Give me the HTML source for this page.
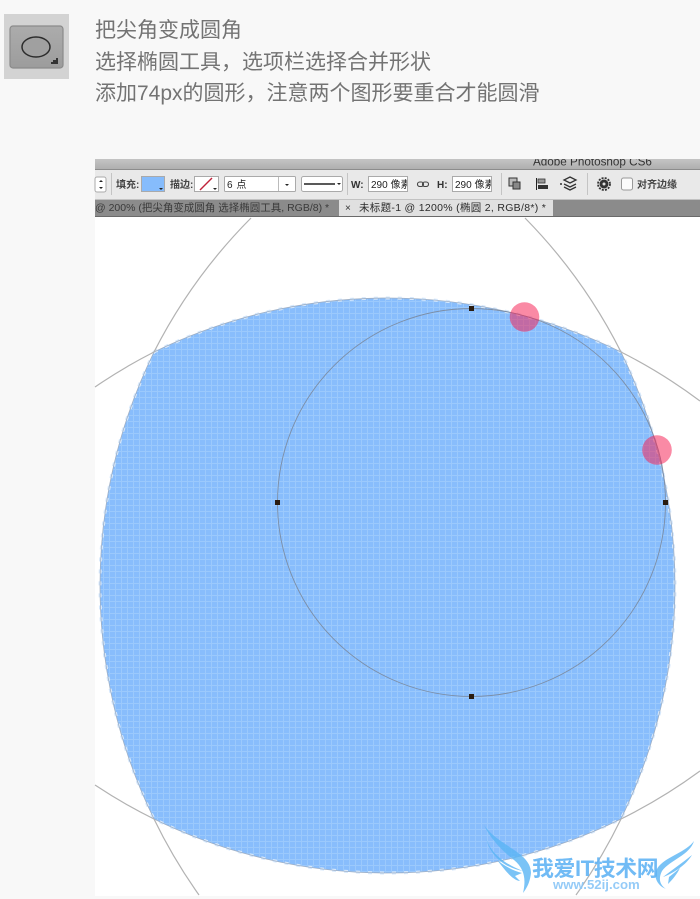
<!DOCTYPE html>
<html lang="zh">
<head>
<meta charset="utf-8">
<style>
html,body{margin:0;padding:0;width:700px;height:899px;overflow:hidden;background:#f8f8f8}
body{position:relative;font-family:"Liberation Sans","Noto Sans CJK SC",sans-serif}
.t{position:absolute;left:95px;font-size:21px;line-height:32px;color:#737373;white-space:nowrap;font-family:"Liberation Sans","Noto Sans CJK SC",sans-serif}
svg{position:absolute;left:0;top:0;display:block}
svg text{font-family:"Liberation Sans","Noto Sans CJK SC",sans-serif}
</style>
</head>
<body>
<div class="t" style="top:15px">把尖角变成圆角</div>
<div class="t" style="top:47px">选择椭圆工具，选项栏选择合并形状</div>
<div class="t" style="top:78px">添加74px的圆形，注意两个图形要重合才能圆滑</div>
<svg width="700" height="899" viewBox="0 0 700 899" xmlns="http://www.w3.org/2000/svg">
<defs>
<pattern id="g" width="6" height="6" patternUnits="userSpaceOnUse" x="1" y="1">
<rect width="6" height="6" fill="#88bdfc"/>
<path d="M0 .5H6M.5 0V6" stroke="#9bc9fc" stroke-width="1"/>
</pattern>
<clipPath id="tc"><rect x="95" y="159" width="605" height="11"/></clipPath>
<linearGradient id="tb" x1="0" y1="0" x2="0" y2="1"><stop offset="0" stop-color="#c4c4c4"/><stop offset="1" stop-color="#adadad"/></linearGradient>
<linearGradient id="ic" x1="0" y1="0" x2="0" y2="1"><stop offset="0" stop-color="#acacac"/><stop offset="1" stop-color="#9c9c9c"/></linearGradient>
</defs>

<!-- tool icon -->
<rect x="4" y="14" width="65" height="65" fill="#d3d3d3"/>
<rect x="10" y="26" width="53" height="42" rx="3" fill="url(#ic)" stroke="#8a8a8a" stroke-width="1.200"/>
<ellipse cx="36" cy="47" rx="14" ry="10" fill="#a0a0a0" stroke="#2c2c2c" stroke-width="1.500"/>
<path d="M51 64h7v-6h-2v2h-3v2h-2z" fill="#333"/>

<!-- image area -->
<rect x="95" y="217" width="605" height="679" fill="#fff"/>
<path d="M154 352A532 532 0 0 1 621 352A532 532 0 0 1 621 819A532 532 0 0 1 154 819A532 532 0 0 1 154 352Z" fill="url(#g)"/>
<path d="M154 352A532 532 0 0 1 621 352A532 532 0 0 1 621 819A532 532 0 0 1 154 819A532 532 0 0 1 154 352Z" fill="none" stroke="#d6e8fc" stroke-width="3" stroke-dasharray="4 8"/>
<path d="M154 352A532 532 0 0 1 621 352A532 532 0 0 1 621 819A532 532 0 0 1 154 819A532 532 0 0 1 154 352Z" fill="none" stroke="#9fb0c6" stroke-width=".8"/>
<g fill="none" stroke="#b2b2b2" stroke-width="1.200">
<path d="M251 218A532 532 0 0 0 154 352"/>
<path d="M95 387A532 532 0 0 1 154 352"/>
<path d="M621 352A532 532 0 0 1 700 401"/>
<path d="M525 218A532 532 0 0 1 621 352"/>
<path d="M154 819A532 532 0 0 0 199 895"/>
<path d="M95 785A532 532 0 0 0 154 819"/>
<path d="M621 819A532 532 0 0 0 700 771"/>
<path d="M621 819A532 532 0 0 1 576 895"/>
</g>
<circle cx="471.500" cy="502.500" r="194" fill="none" stroke="#7c8ea6" stroke-width=".9"/>
<g fill="#2a1c10">
<rect x="469" y="306" width="5" height="5"/>
<rect x="663" y="500" width="5" height="5"/>
<rect x="275" y="500" width="5" height="5"/>
<rect x="469" y="694" width="5" height="5"/>
</g>
<circle cx="524.500" cy="317" r="14.800" fill="#f51e52" fill-opacity=".52"/>
<circle cx="657" cy="450" r="14.800" fill="#f51e52" fill-opacity=".52"/>

<!-- title bar -->
<rect x="95" y="159" width="605" height="11" fill="url(#tb)"/>
<rect x="95" y="169" width="605" height="1" fill="#8c8c8c"/>
<text x="533" y="165.500" font-size="11.700" fill="#333" clip-path="url(#tc)">Adobe Photoshop CS6</text>

<!-- option bar -->
<rect x="95" y="170" width="605" height="29" fill="#e9e9e9"/>
<g stroke="#c4c4c4"><path d="M111.500 173V195M347.500 173V195M501.500 173V195M587.500 173V195"/></g>
<rect x="95" y="177" width="11" height="15" rx="2" fill="#fff" stroke="#aaa"/>
<path d="M99 182l2-2 2 2zM99 187l2 2 2-2z" fill="#222"/>
<text x="116" y="188" font-size="10" font-weight="700" fill="#444">填充:</text>
<rect x="141.500" y="176.500" width="23" height="15" fill="#86bcfc" stroke="#aaa"/>
<path d="M159 188h4l-2 2z" fill="#222"/>
<text x="170" y="188" font-size="10" font-weight="700" fill="#444">描边:</text>
<rect x="194.500" y="176.500" width="24" height="15" fill="#fff" stroke="#aaa"/>
<path d="M200 190L212 178" stroke="#c0223a" stroke-width="1.400"/>
<path d="M213 188h4l-2 2z" fill="#222"/>
<rect x="224.500" y="176.500" width="71" height="15" rx="1" fill="#fff" stroke="#aaa"/>
<path d="M278.500 177V191" stroke="#bbb"/>
<path d="M285 184h4l-2 2z" fill="#222"/>
<text x="227" y="188" font-size="10" fill="#222" letter-spacing=".5">6 点</text>
<rect x="301.500" y="176.500" width="41" height="15" rx="2" fill="#fff" stroke="#aaa"/>
<path d="M304 184H335" stroke="#222" stroke-width="1.600"/>
<path d="M337 183h4l-2 2z" fill="#222"/>
<text x="351" y="188" font-size="10" font-weight="700" fill="#333">W:</text>
<rect x="368.500" y="176.500" width="39" height="15" fill="#fff" stroke="#aaa"/>
<svg x="369" y="177" width="38" height="14" viewBox="369 177 38 14"><text x="371" y="188" font-size="10" fill="#222">290 像素</text></svg>
<rect x="417.500" y="182" width="6" height="4.500" rx="2.200" fill="none" stroke="#444" stroke-width="1.100"/>
<rect x="422.500" y="182" width="6" height="4.500" rx="2.200" fill="none" stroke="#444" stroke-width="1.100"/>
<text x="437" y="188" font-size="10" font-weight="700" fill="#333">H:</text>
<rect x="452.500" y="176.500" width="39" height="15" fill="#fff" stroke="#aaa"/>
<svg x="453" y="177" width="38" height="14" viewBox="453 177 38 14"><text x="455" y="188" font-size="10" fill="#222">290 像素</text></svg>
<rect x="509" y="178" width="8" height="8" fill="#bbb" stroke="#333"/>
<rect x="513" y="182" width="7" height="7" fill="#888" stroke="#333"/>
<path d="M536.500 178V190" stroke="#222"/><rect x="538" y="179" width="7" height="4" fill="#999" stroke="#333" stroke-width=".8"/><rect x="538" y="185" width="10" height="4" fill="#333"/>
<path d="M570 177l6 3-6 3-6-3zM564 184l6 3 6-3M564 187l6 3 6-3" fill="none" stroke="#333" stroke-width="1.300"/>
<circle cx="561" cy="184" r="1" fill="#333"/>
<circle cx="604" cy="184" r="4.500" fill="#333"/><circle cx="604" cy="184" r="6" fill="none" stroke="#333" stroke-width="1.800" stroke-dasharray="2 1.200"/><circle cx="604" cy="184" r="1.500" fill="#ddd"/>
<rect x="621.500" y="178" width="11" height="12" rx="2" fill="#fbfbfb" stroke="#999"/>
<text x="637" y="188" font-size="10" font-weight="700" fill="#444">对齐边缘</text>

<!-- tab bar -->
<rect x="95" y="199.500" width="605" height="17.500" fill="#8b8b8b"/>
<rect x="95" y="216" width="605" height="1" fill="#6a6a6a"/>
<text x="95" y="211" font-size="10.500" fill="#3a3a3a">@ 200% (把尖角变成圆角 选择椭圆工具, RGB/8) *</text>
<rect x="339" y="200" width="214" height="16" fill="#e0e0e0"/>
<text x="345" y="211" font-size="10" fill="#333">×</text>
<text x="359" y="211" font-size="10.500" fill="#2a2a2a" letter-spacing=".3">未标题-1 @ 1200% (椭圆 2, RGB/8*) *</text>

<!-- watermark -->
<g fill="#5ab5f5" opacity=".8">
<path d="M484 825C498 846 531 852 531 873C530 882 527 888 523 893C526 880 525 869 514 860C502 851 490 838 484 825Z"/>
<path d="M486 838C490 852 504 864 523 871C505 868 490 856 486 838Z"/>
<path d="M497 860C506 867 514 871 522 873L515 876L520 881C512 880 505 870 497 860Z"/>
<path d="M694 841C690 855 670 860 662 871C658 879 660 885 666 889C656 885 652 874 659 866C668 856 686 852 694 841Z"/>
<path d="M692 855C686 865 674 873 663 877C672 870 682 863 692 855Z"/>
<path d="M680 868C677 874 673 879 668 884L669 877L674 873Z"/>
</g>
<text x="532" y="876" font-size="21.800" font-weight="700" fill="#5eb2f4" letter-spacing="-.3" opacity=".88">我爱IT技术网</text>
<text x="553" y="889" font-size="13.200" font-weight="700" fill="#8ac6f7" opacity=".9">www.52ij.com</text>
</svg>
</body>
</html>
